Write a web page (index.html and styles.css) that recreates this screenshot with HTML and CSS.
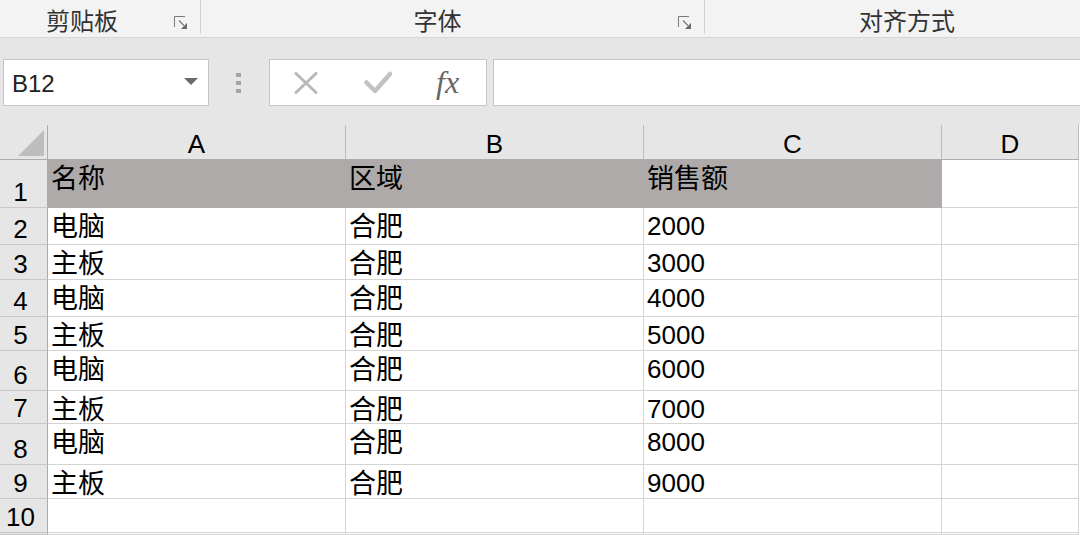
FILE: index.html
```html
<!DOCTYPE html>
<html lang="zh-CN">

<head>
    <meta charset="UTF-8">
    <meta name="viewport" content="width=device-width, initial-scale=1.0">
    <title>销售额</title>
    <link rel="stylesheet" href="styles.css">
</head>

<body>
    <!-- ribbon group labels -->
    <div class="ribbon">
        <div class="group group-clip">
            <span class="group-label">剪贴板</span>
            <span class="launcher">
                <svg width="14" height="14" viewBox="0 0 14 14">
                    <path d="M0.5 11 V0.5 H11" fill="none" stroke="#7a7a7a" stroke-width="1"/>
                    <path d="M5 4.5 L10 9.5" stroke="#7a7a7a" stroke-width="1.2"/>
                    <path d="M13 7 V13 H7 Z" fill="#6a6a6a"/>
                </svg>
            </span>
        </div>
        <div class="group group-font">
            <span class="group-label">字体</span>
            <span class="launcher">
                <svg width="14" height="14" viewBox="0 0 14 14">
                    <path d="M0.5 11 V0.5 H11" fill="none" stroke="#7a7a7a" stroke-width="1"/>
                    <path d="M5 4.5 L10 9.5" stroke="#7a7a7a" stroke-width="1.2"/>
                    <path d="M13 7 V13 H7 Z" fill="#6a6a6a"/>
                </svg>
            </span>
        </div>
        <div class="group group-align">
            <span class="group-label">对齐方式</span>
        </div>
    </div>

    <!-- name box + formula bar -->
    <div class="formula-bar">
        <div class="name-box">
            <span class="name-text">B12</span>
            <svg class="name-arrow" width="14" height="7" viewBox="0 0 14 7">
                <path d="M0 0 H14 L7 7 Z" fill="#6b6b6b"/>
            </svg>
        </div>
        <div class="grip"><i></i><i></i><i></i></div>
        <div class="fx-box">
            <svg class="icon-cancel" width="24" height="22" viewBox="0 0 24 22">
                <path d="M2 1.5 L22 20.5 M22 1.5 L2 20.5" stroke="#b8b8b8" stroke-width="3" stroke-linecap="round"/>
            </svg>
            <svg class="icon-enter" width="28" height="24" viewBox="0 0 28 24">
                <path d="M2.5 11.5 L11 20 L26 3" fill="none" stroke="#c2c2c2" stroke-width="4.5" stroke-linecap="round" stroke-linejoin="round"/>
            </svg>
            <span class="fx">fx</span>
        </div>
        <div class="formula-input"></div>
    </div>

    <!-- worksheet -->
    <div class="sheet">
        <div class="corner">
            <svg width="47" height="34" viewBox="0 0 47 34">
                <path d="M18 31 H44 V5 Z" fill="#bdbdbd"/>
            </svg>
        </div>
        <div class="col-head">A</div>
        <div class="col-head">B</div>
        <div class="col-head">C</div>
        <div class="col-head">D</div>
        <div></div>

        <div class="row-head">1</div>
        <div class="cell zh fill">名称</div>
        <div class="cell zh fill">区域</div>
        <div class="cell zh fill">销售额</div>
        <div class="cell"></div>
        <div></div>

        <div class="row-head">2</div>
        <div class="cell zh">电脑</div>
        <div class="cell zh">合肥</div>
        <div class="cell num">2000</div>
        <div class="cell"></div>
        <div></div>

        <div class="row-head">3</div>
        <div class="cell zh">主板</div>
        <div class="cell zh">合肥</div>
        <div class="cell num">3000</div>
        <div class="cell"></div>
        <div></div>

        <div class="row-head">4</div>
        <div class="cell zh">电脑</div>
        <div class="cell zh">合肥</div>
        <div class="cell num">4000</div>
        <div class="cell"></div>
        <div></div>

        <div class="row-head">5</div>
        <div class="cell zh">主板</div>
        <div class="cell zh">合肥</div>
        <div class="cell num">5000</div>
        <div class="cell"></div>
        <div></div>

        <div class="row-head">6</div>
        <div class="cell zh">电脑</div>
        <div class="cell zh">合肥</div>
        <div class="cell num">6000</div>
        <div class="cell"></div>
        <div></div>

        <div class="row-head">7</div>
        <div class="cell zh">主板</div>
        <div class="cell zh">合肥</div>
        <div class="cell num">7000</div>
        <div class="cell"></div>
        <div></div>

        <div class="row-head">8</div>
        <div class="cell zh">电脑</div>
        <div class="cell zh">合肥</div>
        <div class="cell num">8000</div>
        <div class="cell"></div>
        <div></div>

        <div class="row-head">9</div>
        <div class="cell zh">主板</div>
        <div class="cell zh">合肥</div>
        <div class="cell num">9000</div>
        <div class="cell"></div>
        <div></div>

        <div class="row-head">10</div>
        <div class="cell"></div>
        <div class="cell"></div>
        <div class="cell"></div>
        <div class="cell"></div>
        <div></div>

        <div class="row-head"></div>
        <div class="cell"></div>
        <div class="cell"></div>
        <div class="cell"></div>
        <div class="cell"></div>
        <div></div>
    </div>
</body>

</html>
```

FILE: styles.css
```css
body {
    margin: 0;
    width: 1080px;
    height: 535px;
    overflow: hidden;
    background: #ffffff;
    font-family: "Liberation Sans", "Noto Sans CJK SC", sans-serif;
    color: #000000;
}

/* ribbon */

.ribbon {
    display: flex;
    height: 37px;
    background: #f3f3f3;
    border-bottom: 1px solid #d6d6d6;
    overflow: hidden;
}

.group {
    display: flex;
    flex-shrink: 0;
    height: 34px;
    box-sizing: border-box;
}

.group-clip {
    width: 201px;
    border-right: 1px solid #d2d2d2;
}

.group-font {
    width: 504px;
    border-right: 1px solid #d2d2d2;
}

.group-align {
    width: 404px;
}

.group-label {
    flex: 1;
    text-align: center;
    font-family: "Noto Sans CJK SC", sans-serif;
    font-size: 24px;
    line-height: 34px;
    padding-top: 3px;
    color: #333333;
}

.group-clip .group-label {
    padding-right: 6px;
}

.launcher {
    width: 30px;
    padding: 16px 0 0 4px;
    box-sizing: border-box;
}

.launcher svg {
    display: block;
}

/* formula bar */

.formula-bar {
    display: flex;
    height: 47px;
    padding: 21px 0 19px 3px;
    background: #e6e6e6;
}

.name-box {
    display: flex;
    align-items: center;
    width: 206px;
    box-sizing: border-box;
    background: #ffffff;
    border: 1px solid #c6c6c6;
    padding: 2px 10px 0 8px;
}

.name-text {
    font-size: 24px;
    color: #222222;
}

.name-arrow {
    margin-left: auto;
    margin-top: -4px;
}

.grip {
    display: flex;
    flex-direction: column;
    gap: 4px;
    align-self: center;
    margin: 0 28px 0 27px;
}

.grip i {
    display: block;
    width: 5px;
    height: 4px;
    background: #a3a3a3;
}

.fx-box {
    display: flex;
    align-items: center;
    width: 218px;
    box-sizing: border-box;
    background: #ffffff;
    border: 1px solid #c6c6c6;
}

.icon-cancel {
    margin-left: 24px;
}

.icon-enter {
    margin-left: 46px;
}

.fx {
    margin-left: 44px;
    font-family: "Liberation Serif", serif;
    font-style: italic;
    font-size: 32px;
    line-height: 40px;
    color: #666666;
    padding-bottom: 2px;
}

.formula-input {
    flex: 1;
    margin-left: 6px;
    margin-right: -10px;
    background: #ffffff;
    border: 1px solid #c6c6c6;
}

/* sheet grid */

.sheet {
    display: grid;
    grid-template-columns: 48px 298px 298px 298px 137px 1fr;
    grid-template-rows: 35px 48px 37px 35px 37px 34px 40px 33px 41px 34px 34px 2px;
    overflow: hidden;
}

.sheet > div {
    box-sizing: border-box;
}

.corner {
    background: #e6e6e6;
    border-right: 1px solid #ababab;
    border-bottom: 1px solid #ababab;
}

.corner svg {
    display: block;
}

.col-head {
    background: #e6e6e6;
    border-right: 1px solid #bcbcbc;
    border-bottom: 1px solid #ababab;
    text-align: center;
    font-size: 26px;
    line-height: 30px;
    padding-top: 4px;
}

.row-head {
    display: flex;
    align-items: flex-end;
    justify-content: center;
    padding-right: 6px;
    background: #e6e6e6;
    border-right: 1px solid #ababab;
    border-bottom: 1px solid #c8c8c8;
    font-size: 26px;
    line-height: 30px;
}

.cell {
    border-right: 1px solid #d4d4d4;
    border-bottom: 1px solid #d4d4d4;
    padding-left: 3px;
    white-space: nowrap;
}

.cell.zh {
    font-family: "Noto Sans CJK SC", sans-serif;
    font-size: 27px;
    line-height: 30px;
    padding-top: 2px;
}

.cell.num {
    font-size: 26px;
    line-height: 30px;
    padding-top: 3px;
}

.cell.fill {
    background: #aeaaaa;
    border-color: #aeaaaa;
}
```
